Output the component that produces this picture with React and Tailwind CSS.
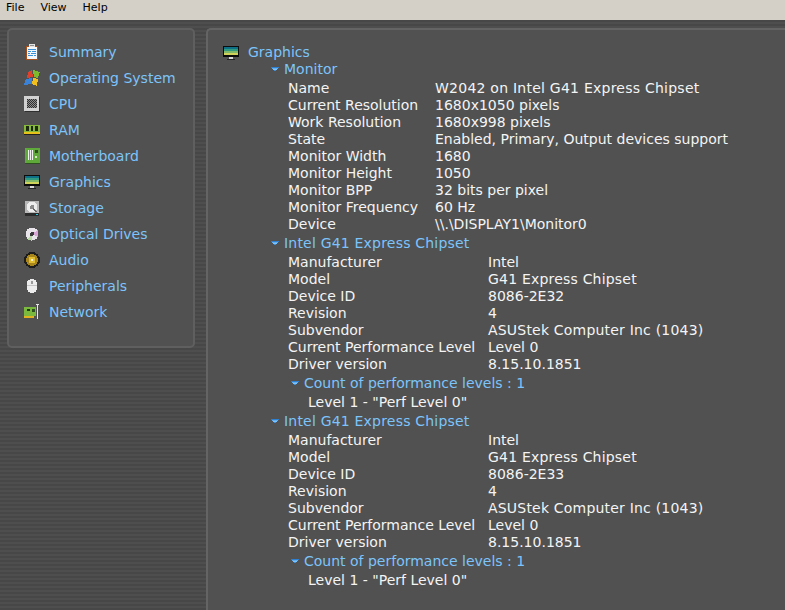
import React from "react";

const Pic = ({ children, className = "" }) => (
  <svg viewBox="0 0 16 16" width="16" height="16" shapeRendering="crispEdges" className={"shrink-0 " + className}>
    {children}
  </svg>
);

const Summary = () => (
  <Pic>
    <rect x="2" y="2" width="12" height="14" fill="#a8501c" />
    <rect x="3" y="3" width="10" height="12" fill="#f4f8fb" />
    <rect x="5" y="0" width="6" height="3" fill="#e4e4e4" />
    <rect x="6" y="1" width="4" height="1" fill="#8e8e8e" />
    <rect x="4" y="5" width="8" height="1" fill="#3a8fd6" />
    <rect x="4" y="7" width="3" height="1" fill="#3a8fd6" />
    <rect x="8" y="7" width="4" height="1" fill="#3a8fd6" />
    <rect x="4" y="9" width="2" height="1" fill="#3a8fd6" />
    <rect x="7" y="9" width="5" height="1" fill="#3a8fd6" />
    <rect x="4" y="11" width="5" height="1" fill="#3a8fd6" />
    <rect x="10" y="11" width="2" height="1" fill="#3a8fd6" />
  </Pic>
);
const Windows = () => (
  <Pic>
    <path d="M4 2 L8 0 L9 7 L3 8 Z" fill="#e0402c" />
    <path d="M9 0 L16 2 L14 8 L10 7 Z" fill="#7fb92e" />
    <path d="M2 9 L8 8 L8 14 L0 15 Z" fill="#3a82d8" />
    <path d="M9 8 L14 9 L13 16 L8 14 Z" fill="#f2c01e" />
  </Pic>
);
const Cpu = () => {
  const dots = [];
  for (let y = 3; y < 12; y++) for (let x = 3; x < 13; x++) if ((x + y) % 2 === 0) dots.push([x, y]);
  return (
    <Pic>
      <rect x="0" y="0" width="15" height="15" fill="#d2d2d2" />
      <rect x="3" y="3" width="10" height="9" fill="#8c8c8c" />
      {dots.map(([x, y]) => (
        <rect key={x + "-" + y} x={x} y={y} width="1" height="1" fill="#2f2f2f" />
      ))}
      <rect x="15" y="1" width="1" height="15" fill="#2f2f2f" />
      <rect x="1" y="15" width="15" height="1" fill="#2f2f2f" />
    </Pic>
  );
};
const Ram = () => (
  <Pic>
    <rect x="0" y="3" width="16" height="7" fill="#86b83a" />
    <rect x="2" y="4" width="3" height="5" fill="#1c2a12" />
    <rect x="7" y="4" width="2" height="5" fill="#1c2a12" />
    <rect x="11" y="4" width="3" height="5" fill="#1c2a12" />
    <rect x="0" y="10" width="16" height="2" fill="#e5c11a" />
    <rect x="0" y="12" width="16" height="1" fill="#222" />
  </Pic>
);
const Board = () => (
  <Pic>
    <rect x="1" y="0" width="15" height="15" fill="#5fa83a" />
    <rect x="4" y="2" width="1" height="10" fill="#f2f2f2" />
    <rect x="6" y="2" width="1" height="10" fill="#f2f2f2" />
    <rect x="8" y="2" width="1" height="10" fill="#f2f2f2" />
    <rect x="11" y="2" width="3" height="3" fill="#2e4f20" />
    <rect x="11" y="8" width="2" height="2" fill="#d8e8c8" />
    <rect x="1" y="15" width="15" height="1" fill="#2e4f20" />
  </Pic>
);
const Monitor = () => (
  <Pic>
    <rect x="0" y="1" width="16" height="11" fill="#0c0c0c" />
    <rect x="1" y="2" width="14" height="2" fill="#0f6f86" />
    <rect x="1" y="4" width="14" height="2" fill="#2f9a80" />
    <rect x="1" y="6" width="14" height="2" fill="#7fb868" />
    <rect x="1" y="8" width="14" height="2" fill="#cfd25a" />
    <rect x="6" y="12" width="4" height="2" fill="#d8d8d8" />
    <rect x="4" y="14" width="8" height="1" fill="#222" />
  </Pic>
);
const Storage = () => (
  <Pic>
    <rect x="1" y="1" width="14" height="14" fill="#b8b8b8" />
    <circle cx="8" cy="7" r="5.5" fill="#eeeeee" />
    <circle cx="8" cy="7" r="2" fill="#8d8d8d" />
    <path d="M9 8 L13 11 L12 12 L8 9 Z" fill="#6a6a6a" />
    <rect x="1" y="13" width="14" height="3" fill="#2b2b2b" />
    <rect x="12" y="14" width="2" height="1" fill="#35c6e0" />
  </Pic>
);
const Disc = () => (
  <Pic>
    <circle cx="8" cy="8" r="6.5" fill="#e8e4ea" />
    <path d="M8 8 L14 4 L14 11 Z" fill="#d9a6d6" />
    <path d="M8 8 L3 13 L8 15 Z" fill="#b8d8a6" />
    <circle cx="8" cy="8" r="2" fill="#3a3a3a" />
  </Pic>
);
const Audio = () => (
  <Pic>
    <circle cx="8" cy="8" r="8" fill="#1d1d1d" />
    <circle cx="8" cy="8" r="6" fill="#a8841c" />
    <circle cx="8" cy="8" r="3.5" fill="#e0bc30" />
    <circle cx="8" cy="8" r="1.5" fill="#f4efd8" />
  </Pic>
);
const Mouse = () => (
  <Pic>
    <rect x="3" y="1" width="10" height="14" rx="4.5" fill="#ececec" />
    <rect x="7" y="3" width="2" height="3" fill="#9a9a9a" />
    <rect x="3" y="7" width="10" height="1" fill="#c4c4c4" />
  </Pic>
);
const Net = () => (
  <Pic>
    <rect x="0" y="3" width="12" height="9" fill="#7ab83e" />
    <rect x="3" y="5" width="3" height="2" fill="#1f3a18" />
    <rect x="8" y="5" width="3" height="3" fill="#2e4f20" />
    <rect x="0" y="12" width="10" height="2" fill="#e0b41e" />
    <rect x="13" y="0" width="1" height="15" fill="#e8e8e8" />
    <rect x="12" y="0" width="3" height="1" fill="#e8e8e8" />
  </Pic>
);

const nav = [
  ["Summary", Summary],
  ["Operating System", Windows],
  ["CPU", Cpu],
  ["RAM", Ram],
  ["Motherboard", Board],
  ["Graphics", Monitor],
  ["Storage", Storage],
  ["Optical Drives", Disc],
  ["Audio", Audio],
  ["Peripherals", Mouse],
  ["Network", Net],
];

const Caret = () => (
  <svg width="8" height="5" viewBox="0 0 8 5" shapeRendering="crispEdges" className="shrink-0">
    <rect x="0" y="0" width="8" height="1" fill="#2f7fd0" />
    <rect x="1" y="1" width="6" height="1" fill="#62b0f0" />
    <rect x="2" y="2" width="4" height="1" fill="#7cc4ff" />
    <rect x="3" y="3" width="2" height="1" fill="#3f8fd8" />
  </svg>
);

const Head = ({ children, indent, wide = "" }) => (
  <div className={"flex h-[17px] items-center gap-[5px] text-[#7cc4fb] " + indent}>
    <Caret />
    <span className={wide}>{children}</span>
  </div>
);

const Rows = ({ rows, col }) => (
  <div className="mt-[2px] flex flex-col pl-[80px]">
    {rows.map(([k, v, wide]) => (
      <div key={k} className="flex h-[17px] items-center whitespace-nowrap">
        <span className={"shrink-0 " + col}>{k}</span>
        <span className={wide || ""}>{v}</span>
      </div>
    ))}
  </div>
);

const Chip = ({ id }) => (
  <div className="mt-[2px]">
    <Head indent="pl-[63px]" wide="tracking-[0.2px]">Intel G41 Express Chipset</Head>
    <Rows
      col="w-[200px]"
      rows={[
        ["Manufacturer", "Intel"],
        ["Model", "G41 Express Chipset", "tracking-[0.2px]"],
        ["Device ID", id],
        ["Revision", "4"],
        ["Subvendor", "ASUStek Computer Inc (1043)", "tracking-[0.2px]"],
        ["Current Performance Level", "Level 0"],
        ["Driver version", "8.15.10.1851"],
      ]}
    />
    <div className="mt-[2px]">
      <Head indent="pl-[83px]">Count of performance levels : 1</Head>
    </div>
    <div className="mt-[2px] flex h-[17px] items-center pl-[100px]">Level 1 - "Perf Level 0"</div>
  </div>
);

export default function App() {
  return (
    <div className="flex h-[610px] w-[785px] flex-col overflow-hidden bg-[#4c4c4c] text-[14px] leading-[17px] [font-family:DejaVu_Sans,sans-serif]">
      <div className="flex h-[20px] shrink-0 items-start gap-[16px] bg-[#d4d0c8] pl-[6px] text-[11px] leading-[15px] text-black">
        <span>File</span>
        <span>View</span>
        <span>Help</span>
      </div>
      <div className="flex min-h-0 flex-1 bg-[repeating-linear-gradient(180deg,#474747_0px,#474747_2px,#4e4e4e_2px,#4e4e4e_4px)] pt-[8px]">
        <aside className="w-[206px] shrink-0 pl-[7px]">
          <nav className="flex h-[320px] w-[188px] flex-col rounded-[5px] border-2 border-[#5f5f5f] bg-[#515151] pl-[15px] pt-[9px]">
            {nav.map(([label, Icon]) => (
              <div key={label} className="flex h-[26px] items-center gap-[9px] text-[#7cc4fb]">
                <Icon />
                <span>{label}</span>
              </div>
            ))}
          </nav>
        </aside>
        <main className="min-w-0 flex-1 rounded-tl-[5px] border-l-2 border-t-2 border-[#646464] bg-[#515151] pt-[14px] text-[#f4f4f4]">
          <div className="flex h-[17px] items-center gap-[9px] pl-[15px] text-[#7cc4fb]">
            <Monitor />
            <span>Graphics</span>
          </div>
          <Head indent="pl-[63px]">Monitor</Head>
          <Rows
            col="w-[147px]"
            rows={[
              ["Name", "W2042 on Intel G41 Express Chipset", "tracking-[0.24px]"],
              ["Current Resolution", "1680x1050 pixels"],
              ["Work Resolution", "1680x998 pixels"],
              ["State", "Enabled, Primary, Output devices support"],
              ["Monitor Width", "1680"],
              ["Monitor Height", "1050"],
              ["Monitor BPP", "32 bits per pixel"],
              ["Monitor Frequency", "60 Hz"],
              ["Device", "\\\\.\\DISPLAY1\\Monitor0"],
            ]}
          />
          <Chip id="8086-2E32" />
          <Chip id="8086-2E33" />
        </main>
      </div>
    </div>
  );
}
